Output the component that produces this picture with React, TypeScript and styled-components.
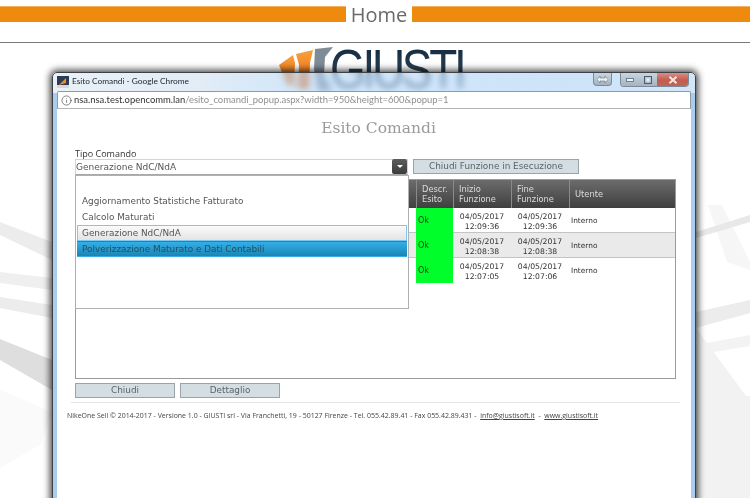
import React from 'react';
import styled, { createGlobalStyle } from 'styled-components';
import { Info } from 'lucide-react';

const GlobalStyle = createGlobalStyle`
  html, body {
    margin: 0;
    padding: 0;
    height: 100%;
    overflow: hidden;
    background: #ffffff;
    font-family: 'DejaVu Sans', sans-serif;
  }
`;

const Page = styled.div`
  position: relative;
  width: 750px;
  height: 498px;
  overflow: hidden;
  background: #fff;
`;

const Backdrop = styled.svg`
  position: absolute;
  inset: 0;
`;

const HomeHeader = styled.header`
  position: relative;
  display: flex;
  align-items: stretch;
  height: 16px;
  margin-top: 6px;
`;

const HomeBar = styled.div<{ $left?: boolean }>`
  flex: ${(p) => (p.$left ? '0 0 346px' : '1')};
  background: #ef8b0c;
  border-top: 1px solid #f5b162;
`;

const HomeTitle = styled.h1`
  width: 66px;
  margin: 0;
  font: 400 20px/17px 'Open Sans', sans-serif;
  color: #6a6a6a;
  text-align: center;
  filter: blur(0.3px);
`;

const HeaderRule = styled.hr`
  position: relative;
  height: 1px;
  margin: 20px 0 0;
  border: 0;
  background: #77797b;
`;

const LogoRow = styled.div`
  position: relative;
  display: flex;
  align-items: flex-start;
  height: 48px;
  margin-top: 2px;
  padding-left: 278px;
  filter: blur(0.3px);
`;

const LogoMark = styled.svg`
  width: 58px;
  height: 48px;
  flex: none;
`;

const LogoText = styled.div`
  flex: none;
  margin: 1px 0 0 -6px;
  padding-right: 10px;
  font: 400 56px/45px 'Liberation Sans', sans-serif;
  letter-spacing: -4px;
  white-space: nowrap;
  transform: scaleX(0.82);
  transform-origin: left center;
  background: linear-gradient(#12293f, #3d5568);
  -webkit-background-clip: text;
  background-clip: text;
  color: transparent;
`;

const ChromeWindow = styled.section`
  position: absolute;
  left: 52px;
  top: 72px;
  width: 644px;
  height: 440px;
  border: 1px solid #3c4148;
  border-radius: 5px 5px 0 0;
  box-sizing: border-box;
  padding: 0 4px;
  background:
    linear-gradient(90deg, #e6eef5d9 0, #dde9f4d9 22%, #b4d6f699 38%, #b4d6f6aa 80%, #c8e0f5cc 100%) top / 100% 20px no-repeat,
    linear-gradient(#a9cdee, #a9cdee) bottom / 100% calc(100% - 20px) no-repeat;
  backdrop-filter: blur(3px);
  box-shadow: 0 0 7px 2px rgba(0, 0, 0, 0.75);
  display: flex;
  flex-direction: column;
`;

const TitleBar = styled.div`
  display: flex;
  align-items: flex-start;
  height: 18px;
  flex: none;
`;

const TitleIcon = styled.svg`
  width: 12px;
  height: 12px;
  margin: 3px 3px 0 0;
`;

const TitleText = styled.span`
  font: 400 8.3px/16px 'Lato', sans-serif;
  color: #1c2530;
  flex: 1;
`;

const ResizeButton = styled.div`
  width: 19px;
  height: 13px;
  margin-right: 8px;
  box-sizing: border-box;
  border: 1px solid #7d8b99;
  border-top: 0;
  border-radius: 0 0 4px 4px;
  background: linear-gradient(#c9d6e2, #a3b3c2);
  display: flex;
  align-items: center;
  justify-content: center;
`;

const CaptionGroup = styled.div`
  display: flex;
  margin-right: 2px;
  height: 13px;
  border: 1px solid #7d8b99;
  border-top: 0;
  border-radius: 0 0 4px 4px;
  overflow: hidden;
`;

const CaptionButton = styled.div<{ $wide?: boolean; $close?: boolean }>`
  width: ${(p) => (p.$wide ? 31 : 18)}px;
  display: flex;
  align-items: center;
  justify-content: center;
  background: ${(p) =>
    p.$close
      ? 'linear-gradient(#d88f85, #c65a4e 55%, #bd665c)'
      : 'linear-gradient(#c9d6e2, #a3b3c2)'};
`;

const AddressBar = styled.div`
  display: flex;
  align-items: center;
  flex: none;
  height: 18px;
  padding-left: 3px;
  background: #fff;
  border: 1px solid #8f9aa5;
  border-bottom-color: #b5b5b5;
  border-radius: 2px 2px 0 0;
  box-sizing: border-box;
  font: 400 9.45px/16px 'Lato', sans-serif;
  color: #333;
  filter: blur(0.2px);

  svg {
    margin-right: 2px;
  }
`;

const AddressPath = styled.span`
  color: #8f8f8f;
`;

const WindowBody = styled.div`
  flex: 1;
  position: relative;
  background: #fff;
  padding: 0 15px 0 18px;
  filter: blur(0.25px);
`;

const PageTitle = styled.h2`
  margin: 9px 0 0;
  padding-left: 6px;
  font: 400 15.5px/20px 'DejaVu Serif', serif;
  color: #9a9a9a;
  text-align: center;
`;

const FieldLabel = styled.div`
  margin: 10px 0 -1px;
  font: 400 9px/12px 'Open Sans', sans-serif;
  color: #333;
`;

const ControlRow = styled.div`
  display: flex;
  gap: 5px;
  height: 16px;
`;

const ComboBox = styled.div`
  position: relative;
  width: 333px;
  height: 16px;
  box-sizing: border-box;
  border: 1px solid #d4d4d4;
  border-bottom-color: #a8a8a8;
  font: 400 9px/14px 'DejaVu Sans', sans-serif;
  color: #555;
`;

const ComboArrow = styled.div`
  position: absolute;
  right: 0;
  top: -1px;
  width: 15px;
  height: 15px;
  border-radius: 2px;
  background: linear-gradient(#5c5c5c, #3c3c3c);
  display: flex;
  align-items: center;
  justify-content: center;

  &::after {
    content: '';
    border-left: 3px solid transparent;
    border-right: 3px solid transparent;
    border-top: 3px solid #fff;
  }
`;

const GreyButton = styled.button<{ $width: number }>`
  width: ${(p) => p.$width}px;
  height: 15px;
  padding: 0;
  box-sizing: border-box;
  border: 1px solid #9aa3a8;
  background: #d3dde2;
  font: 400 8.9px/13px 'DejaVu Sans', sans-serif;
  color: #5a6468;
`;

const TableFrame = styled.div`
  position: relative;
  height: 200px;
  margin-top: 4px;
  box-sizing: border-box;
  border: 1px solid #9a9a9a;
`;

const gridColumns = '340px 37px 58px 58px 1fr';

const HeaderRow = styled.div`
  display: grid;
  grid-template-columns: ${gridColumns};
  height: 28px;
  background: linear-gradient(#6c6c6c, #3f3f3f);
`;

const HeaderCell = styled.div`
  display: flex;
  align-items: center;
  padding-left: 5px;
  border-left: 1px solid #8a8a8a;
  font: 400 8.3px/10px 'DejaVu Sans', sans-serif;
  color: #dcdcdc;
`;

const DataRow = styled.div<{ $shaded?: boolean }>`
  display: grid;
  grid-template-columns: ${gridColumns};
  height: 25px;
  box-sizing: border-box;
  background: ${(p) => (p.$shaded ? '#eaeaea' : '#fff')};
  border-bottom: 1px solid #c4c4c4;

  &:last-child {
    border-bottom: 0;
  }
`;

const OkCell = styled.div`
  grid-column: 2;
  padding: 1px 0 0 2px;
  background: #00ff2a;
  font: 400 8px/24px 'DejaVu Sans', sans-serif;
  color: #224422;
`;

const TimeCell = styled.div`
  padding-top: 4px;
  text-align: center;
  font: 400 7.7px/10px 'DejaVu Sans', sans-serif;
  color: #333;
`;

const UserCell = styled.div`
  padding: 1px 0 0 2px;
  font: 400 7.4px/24px 'DejaVu Sans', sans-serif;
  color: #333;
`;

const DropList = styled.ul`
  position: absolute;
  left: 18px;
  top: 66px;
  width: 334px;
  height: 134px;
  margin: 0;
  padding: 17px 1px 0;
  list-style: none;
  box-sizing: border-box;
  background: #fff;
  border: 1px solid #b0b0b0;
`;

const DropItem = styled.li<{ $state?: 'hover' | 'active' }>`
  height: 16px;
  box-sizing: border-box;
  padding-left: 4px;
  font: 400 8.9px/15px 'DejaVu Sans', sans-serif;
  color: #555;
  border: 1px solid transparent;
  ${(p) =>
    p.$state === 'hover' &&
    'background: linear-gradient(#fafafa, #e4e4e4); border-color: #7cc8ee;'}
  ${(p) =>
    p.$state === 'active' &&
    'background: linear-gradient(#35aee8, #1a85b4); border-color: transparent; color: #24505f;'}
`;

const ActionRow = styled.div`
  display: flex;
  gap: 5px;
  margin-top: 4px;
`;

const FooterLine = styled.footer`
  margin: 4px -4px 0;
  border-top: 1px solid #e4e4e4;
  padding-top: 7px;
  text-indent: -4px;
  font: 400 6.97px/12px 'Open Sans', sans-serif;
  color: #444;
  white-space: pre;
`;

const FooterLink = styled.a`
  color: #444;
  text-decoration: underline;
`;

const options = [
  { label: 'Aggiornamento Statistiche Fatturato' },
  { label: 'Calcolo Maturati' },
  { label: 'Generazione NdC/NdA', state: 'hover' as const },
  { label: 'Polverizzazione Maturato e Dati Contabili', state: 'active' as const },
];

const rows = [
  { date: '04/05/2017', start: '12:09:36', end: '12:09:36' },
  { date: '04/05/2017', start: '12:08:38', end: '12:08:38' },
  { date: '04/05/2017', start: '12:07:05', end: '12:07:06' },
];

const App: React.FC = () => (
  <Page>
    <GlobalStyle />
    <Backdrop width="750" height="498" viewBox="0 0 750 498">
      <polygon points="0,222 52,242 52,260 0,235" fill="#ececec" />
      <polygon points="0,272 52,278 52,290 0,283" fill="#efefef" />
      <polygon points="0,297 52,305 52,318 0,308" fill="#ececec" />
      <polygon points="0,339 52,360 52,390 0,360" fill="#dedede" />
      <polygon points="0,390 52,412 40,445 0,468" fill="#fafafa" />
      <polygon points="708,205 722,205 750,262 750,270 727,262" fill="#f6f6f6" />
      <polygon points="696,232 750,215 750,222 696,238" fill="#e8e8e8" />
      <polygon points="696,312 750,300 750,313 696,328" fill="#ececec" />
      <polygon points="696,345 750,335 750,346 696,355" fill="#f3f3f3" />
      <polygon points="696,328 746,396 750,396 750,498 696,498" fill="#f2f2f2" />
    </Backdrop>

    <HomeHeader>
      <HomeBar $left />
      <HomeTitle>Home</HomeTitle>
      <HomeBar />
    </HomeHeader>
    <HeaderRule />

    <LogoRow>
      <LogoMark viewBox="0 0 58 48">
        <defs>
          <linearGradient id="markOrange" x1="0" y1="0" x2="0" y2="1">
            <stop offset="0" stopColor="#f8a03c" />
            <stop offset="1" stopColor="#e8650f" />
          </linearGradient>
        </defs>
        <polygon points="1,20 15,10 17,18 16,42 8,38" fill="url(#markOrange)" />
        <polygon points="18,9 35,5 32,18 31,44 20,44 21,20" fill="url(#markOrange)" />
        <polygon points="37,4 55,2 47,12 46,30 55,46 40,46 36,24" fill="#7f8b96" />
      </LogoMark>
      <LogoText>GIUSTI</LogoText>
    </LogoRow>

    <ChromeWindow>
      <TitleBar>
        <TitleIcon viewBox="0 0 12 12">
          <rect width="12" height="12" fill="#2d3c55" />
          <polygon points="2,9 9,2 9,7" fill="#ef8b2c" />
          <rect y="9" width="12" height="3" fill="#d8d8d8" />
        </TitleIcon>
        <TitleText>Esito Comandi - Google Chrome</TitleText>
        <ResizeButton>
          <svg width="11" height="7" viewBox="0 0 11 7">
            <path d="M0 3.5 3 0v2h5V0l3 3.5L8 7V5H3v2z" fill="#eef2f5" stroke="#66727e" strokeWidth="0.6" />
          </svg>
        </ResizeButton>
        <CaptionGroup>
          <CaptionButton>
            <svg width="8" height="4" viewBox="0 0 8 4">
              <rect x="0.5" y="0.5" width="7" height="3" fill="#eef2f5" stroke="#5d6a76" strokeWidth="0.8" />
            </svg>
          </CaptionButton>
          <CaptionButton>
            <svg width="8" height="8" viewBox="0 0 8 8">
              <rect x="0.5" y="0.5" width="7" height="7" fill="none" stroke="#4f5b67" />
              <rect x="2.5" y="2.5" width="3" height="3" fill="#eef2f5" />
            </svg>
          </CaptionButton>
          <CaptionButton $wide $close>
            <svg width="10" height="8" viewBox="0 0 10 8">
              <path d="M1.5 0.8 8.5 7.2M8.5 0.8 1.5 7.2" stroke="#f4e8e4" strokeWidth="2" />
            </svg>
          </CaptionButton>
        </CaptionGroup>
      </TitleBar>

      <AddressBar>
        <Info size={11} strokeWidth={1.4} color="#444" />
        <span>nsa.nsa.test.opencomm.lan</span>
        <AddressPath>/esito_comandi_popup.aspx?width=950&amp;height=600&amp;popup=1</AddressPath>
      </AddressBar>

      <WindowBody>
        <PageTitle>Esito Comandi</PageTitle>
        <FieldLabel>Tipo Comando</FieldLabel>
        <ControlRow>
          <ComboBox>
            Generazione NdC/NdA
            <ComboArrow />
          </ComboBox>
          <GreyButton $width={166}>Chiudi Funzione in Esecuzione</GreyButton>
        </ControlRow>

        <TableFrame>
          <HeaderRow>
            <HeaderCell />
            <HeaderCell>Descr.<br />Esito</HeaderCell>
            <HeaderCell>Inizio<br />Funzione</HeaderCell>
            <HeaderCell>Fine<br />Funzione</HeaderCell>
            <HeaderCell>Utente</HeaderCell>
          </HeaderRow>
          {rows.map((row, i) => (
            <DataRow key={row.start} $shaded={i === 1}>
              <OkCell>Ok</OkCell>
              <TimeCell>{row.date}<br />{row.start}</TimeCell>
              <TimeCell>{row.date}<br />{row.end}</TimeCell>
              <UserCell>Interno</UserCell>
            </DataRow>
          ))}
        </TableFrame>

        <ActionRow>
          <GreyButton $width={100}>Chiudi</GreyButton>
          <GreyButton $width={100}>Dettaglio</GreyButton>
        </ActionRow>

        <FooterLine>
          {'NikeOne Sell © 2014-2017 - Versione 1.0 - GIUSTI srl - Via Franchetti, 19 - 50127 Firenze - Tel. 055.42.89.41 - Fax 055.42.89.431 -  '}
          <FooterLink>info@giustisoft.it</FooterLink>
          {'  -  '}
          <FooterLink>www.giustisoft.it</FooterLink>
        </FooterLine>

        <DropList>
          {options.map((o) => (
            <DropItem key={o.label} $state={o.state}>{o.label}</DropItem>
          ))}
        </DropList>
      </WindowBody>
    </ChromeWindow>
  </Page>
);

export default App;
